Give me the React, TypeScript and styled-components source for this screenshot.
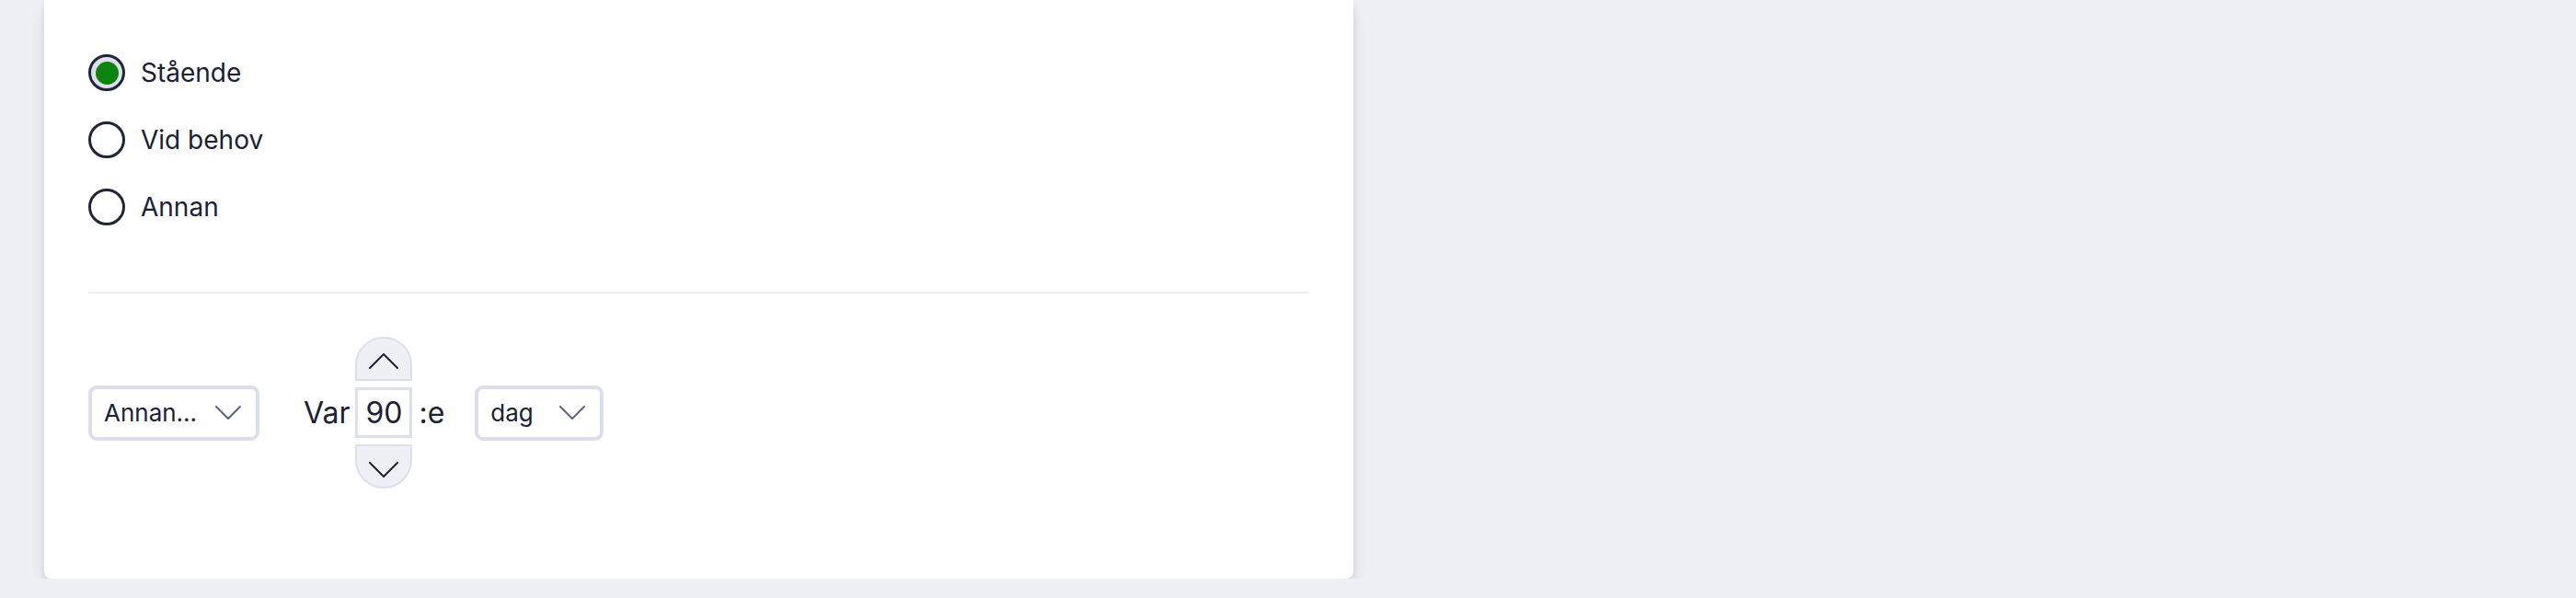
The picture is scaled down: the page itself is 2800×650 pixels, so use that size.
import React from 'react'
import styled, { createGlobalStyle } from 'styled-components'

const GlobalStyle = createGlobalStyle`
  html, body {
    margin: 0;
    padding: 0;
    background: #eff0f5;
    font-family: Inter, "Noto Sans", sans-serif;
    color: #1b2135;
  }
`

const Page = styled.div`
  padding: 0 48px;
  width: 1423px;
`

const Card = styled.div`
  background: #ffffff;
  border-radius: 0 0 8px 8px;
  box-shadow: 0 10px 20px -4px rgba(40, 50, 100, 0.2), 0 2px 6px rgba(40, 50, 100, 0.08);
  padding: 59px 48px 98px;
`

const RadioGroup = styled.div`
  display: flex;
  flex-direction: column;
  gap: 33px;
`

const RadioRow = styled.label`
  display: flex;
  align-items: center;
  gap: 17px;
  font-size: 28px;
  height: 40px;
  cursor: pointer;
`

const RadioCircle = styled.span<{ checked?: boolean }>`
  box-sizing: border-box;
  width: 40px;
  height: 40px;
  border-radius: 50%;
  border: 3px solid #1e2638;
  background: ${(p) => (p.checked ? '#dde0ea' : '#ffffff')};
  display: flex;
  align-items: center;
  justify-content: center;
  flex-shrink: 0;
  &::after {
    content: '';
    display: ${(p) => (p.checked ? 'block' : 'none')};
    width: 25px;
    height: 25px;
    border-radius: 50%;
    background: #0a840e;
  }
`

const Divider = styled.hr`
  border: none;
  height: 2px;
  background: #eeeef3;
  margin: 72px 0 47px;
`

const Row = styled.div`
  display: flex;
  align-items: center;
`

const Select = styled.div<{ width: number }>`
  box-sizing: border-box;
  width: ${(p) => p.width}px;
  height: 60px;
  border: 4px solid #dcdfeb;
  border-radius: 9px;
  padding: 0 16px 0 13px;
  display: flex;
  align-items: center;
  justify-content: space-between;
  font-size: 26px;
  background: #fff;
`

const Word = styled.span<{ gapLeft: number; gapRight: number }>`
  font-size: 32px;
  margin: 0 ${(p) => p.gapRight}px 0 ${(p) => p.gapLeft}px;
`

const Stepper = styled.div`
  display: flex;
  flex-direction: column;
  gap: 7px;
  width: 62px;
`

const StepButton = styled.div<{ up?: boolean }>`
  box-sizing: border-box;
  height: 48px;
  background: #eff0f6;
  border: 2px solid #dde0ec;
  border-radius: ${(p) => (p.up ? '31px 31px 0 0' : '0 0 31px 31px')};
  display: flex;
  justify-content: center;
  align-items: ${(p) => (p.up ? 'flex-end' : 'flex-start')};
  padding: ${(p) => (p.up ? '0 0 11px' : '17px 0 0')};
`

const NumberBox = styled.div`
  box-sizing: border-box;
  height: 55px;
  border: 3px solid #dde0ec;
  display: flex;
  align-items: center;
  justify-content: center;
  font-size: 32px;
`

const Chevron: React.FC<{ dir: 'up' | 'down'; w: number; h: number; color: string }> = ({ dir, w, h, color }) => (
  <svg width={w} height={h} viewBox={`0 0 ${w} ${h}`} fill="none">
    <path
      d={dir === 'down' ? `M1 1 L${w / 2} ${h - 1} L${w - 1} 1` : `M1 ${h - 1} L${w / 2} 1 L${w - 1} ${h - 1}`}
      stroke={color}
      strokeWidth={2}
      strokeLinecap="round"
      strokeLinejoin="round"
    />
  </svg>
)

const options = [
  { label: 'Stående', checked: true },
  { label: 'Vid behov', checked: false },
  { label: 'Annan', checked: false },
]

export default function App() {
  return (
    <>
      <GlobalStyle />
      <Page>
        <Card>
          <RadioGroup>
            {options.map((o) => (
              <RadioRow key={o.label}>
                <RadioCircle checked={o.checked} />
                {o.label}
              </RadioRow>
            ))}
          </RadioGroup>
          <Divider />
          <Row>
            <Select width={186}>
              <span>Annan...</span>
              <Chevron dir="down" w={28} h={15} color="#5b6782" />
            </Select>
            <Word gapLeft={48} gapRight={6}>Var</Word>
            <Stepper>
              <StepButton up>
                <Chevron dir="up" w={32} h={17} color="#1b2135" />
              </StepButton>
              <NumberBox>90</NumberBox>
              <StepButton>
                <Chevron dir="down" w={32} h={17} color="#1b2135" />
              </StepButton>
            </Stepper>
            <Word gapLeft={7} gapRight={33}>:e</Word>
            <Select width={140}>
              <span>dag</span>
              <Chevron dir="down" w={28} h={15} color="#5b6782" />
            </Select>
          </Row>
        </Card>
      </Page>
    </>
  )
}
